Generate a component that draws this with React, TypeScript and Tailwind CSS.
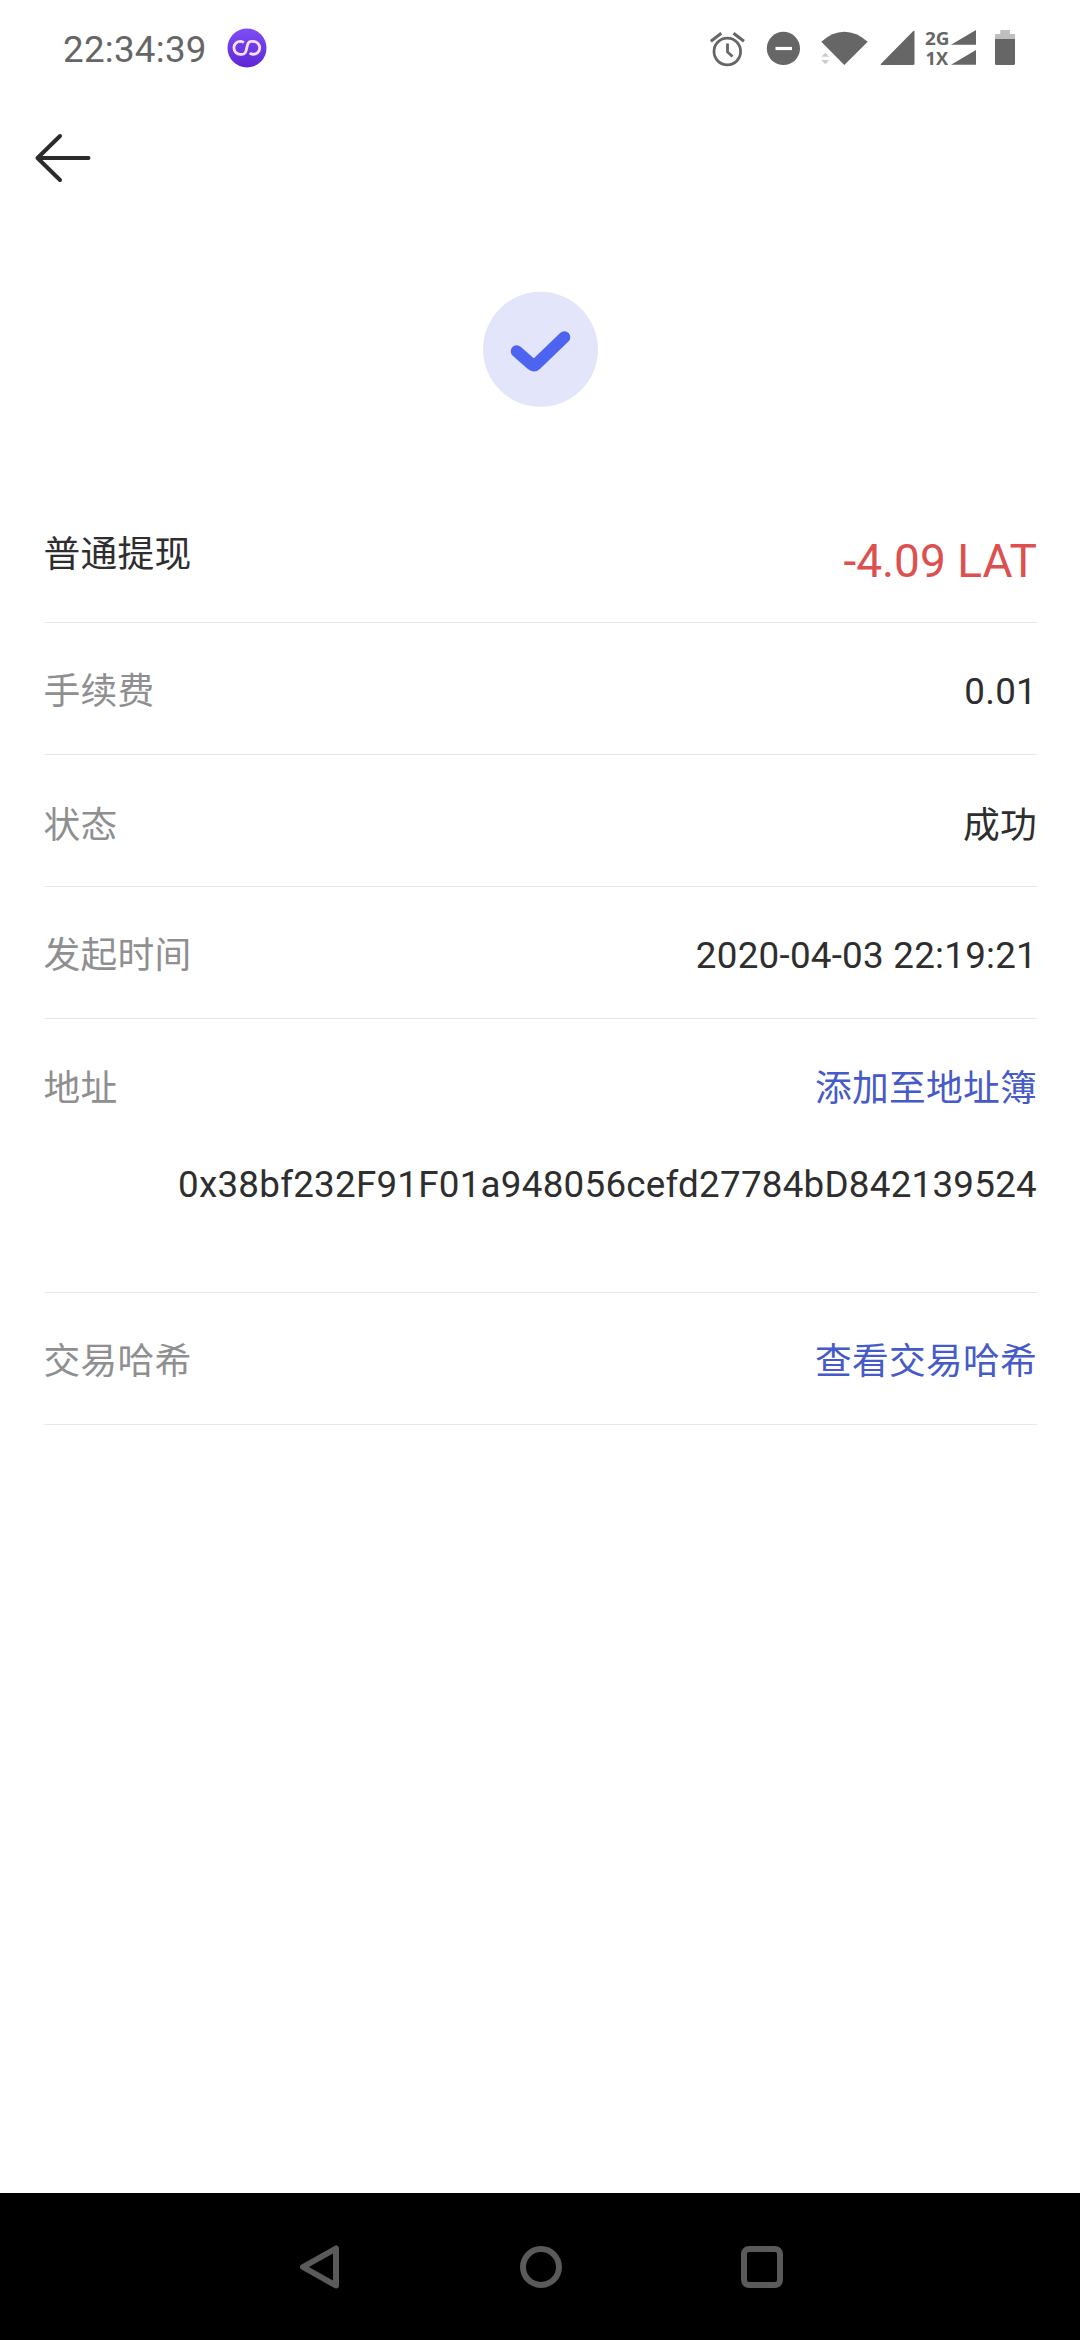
import type { ReactNode } from "react";

const StatusBar = () => {
  return (
    <div className="flex h-24 items-center justify-between pl-[63px] pr-[64px] text-[#666666]">
      {/* Clock + app notification */}
      <div className="flex items-center gap-[21px]">
        <span className="mt-[3px] w-[143px] whitespace-nowrap leading-[43px]">22:34:39</span>
        <svg width="40" height="40" viewBox="0 0 40 40" fill="none">
          <defs>
            <linearGradient id="badge" x1="0" y1="0" x2="0" y2="1">
              <stop offset="0" stopColor="#7f4df6" />
              <stop offset="1" stopColor="#5f26d6" />
            </linearGradient>
          </defs>
          <circle cx="20" cy="20" r="19.5" fill="url(#badge)" />
          <path
            d="M16.800 14.600C16 13.700 14.800 13.300 13.400 13.300A6.500 6.500 0 0 0 13.400 26.300H15C18.300 26.300 18.900 24 19.800 19.800C20.700 15.600 21.300 13.300 24.600 13.300H26.200A6.500 6.500 0 0 1 26.200 26.300C24.800 26.300 23.600 25.900 22.800 25"
            stroke="#f6e2ff"
            strokeWidth="2.800"
          />
        </svg>
      </div>
      {/* System icons */}
      <svg width="306" height="48" viewBox="710 24 306 48" fill="none">
        <circle cx="727.3" cy="51.500" r="13.300" stroke="#666666" strokeWidth="2.800" />
        <path d="M727.500 43.500v8.500l5 4.500" stroke="#666666" strokeWidth="2.800" />
        <path d="M710.800 41.300l10.500-8M744 41.300l-10.500-8" stroke="#666666" strokeWidth="3" />
        <circle cx="783.400" cy="48.400" r="16.600" fill="#666666" />
        <path d="M775.500 48.500h16.500" stroke="#fff" strokeWidth="3.200" />
        <path d="M821.300 41.700Q832 31.700 844.300 31.700T867.700 41.700L844.300 65z" fill="#666666" />
        <path d="M821.300 56.700l4-4 4 4zM821.300 60l4 4.300 4-4.300z" fill="#cccccc" />
        <path d="M914.500 31v32.500q0 1.500-1.500 1.500H881.500q-1.500 0-.5-1.200L912.800 31.500q1-1 1.700-.5z" fill="#666666" />
        <g fill="#666666" fontFamily="Open Sans, sans-serif" fontSize="17.500" fontWeight="700" letterSpacing="0">
          <text x="925" y="44.700" textLength="24.500" lengthAdjust="spacingAndGlyphs">2G</text>
          <text x="925.500" y="64.800" textLength="22.500" lengthAdjust="spacingAndGlyphs">1X</text>
        </g>
        <path d="M976 30v14.700h-25zM976 50v14.700h-25z" fill="#666666" />
        <path d="M1000.300 30h9.700v4h5v5h-20v-5h5.300z" fill="#bfbfbf" />
        <path d="M995 39h20v24.500q0 1.500-1.500 1.500h-17q-1.500 0-1.500-1.500z" fill="#666666" />
      </svg>
    </div>
  );
};

const Row = ({ className, children }: { className: string; children: ReactNode }) => (
  <div className={`flex items-start justify-between border-b border-[#e8e8e8] ${className}`}>
    {children}
  </div>
);

const App = () => {
  return (
    <div className="flex h-[2340px] w-[1080px] flex-col overflow-hidden bg-white font-[Roboto,'Noto_Sans_CJK_SC',sans-serif] text-[36.75px] leading-[45px] tracking-[0.25px] text-[#2e2e2e]">
      <StatusBar />

      {/* Back */}
      <header className="flex h-[124px] items-center pl-[34px]">
        <svg width="58" height="50" viewBox="34 133 58 50" fill="none">
          <path
            d="M60 136L37.500 158L60 180M37.500 158H88.500"
            stroke="#2b2b2b"
            strokeWidth="4"
            strokeLinecap="round"
            strokeLinejoin="round"
          />
        </svg>
      </header>

      {/* Result */}
      <div className="flex justify-center pt-[71px]">
        <svg width="116" height="116" viewBox="0 0 116 116" fill="none">
          <circle cx="58.500" cy="58.300" r="57.500" fill="#e3e5fa" />
          <path
            d="M34.700 60.200L49.500 73.300Q52 75.300 54.500 73L82.300 46.200"
            stroke="#4d64f0"
            strokeWidth="12"
            strokeLinecap="round"
            strokeLinejoin="round"
          />
        </svg>
      </div>

      {/* Transaction details */}
      <main className="flex-1 pl-[43.500px] pr-[43px] pt-[104px] text-[#8f8f91]">
        <Row className="h-[112px]">
          <span className="mt-[21px] text-[#2e2e2e]">普通提现</span>
          <span className="mt-[22px] text-[46px] leading-[56px] tracking-normal text-[#dc5050]">
            -4.09 LAT
          </span>
        </Row>
        <Row className="h-[132px] pt-[46px]">
          <span>手续费</span>
          <span className="text-[#2e2e2e]">0.01</span>
        </Row>
        <Row className="h-[132px] pt-[48px]">
          <span>状态</span>
          <span className="text-[#2e2e2e]">成功</span>
        </Row>
        <Row className="h-[132px] pt-[46px]">
          <span>发起时间</span>
          <span className="text-[#2e2e2e]">2020-04-03 22:19:21</span>
        </Row>
        <div className="h-[274px] border-b border-[#e8e8e8] pt-[47px]">
          <div className="flex justify-between">
            <span>地址</span>
            <span className="text-[#465ac8]">添加至地址簿</span>
          </div>
          <p className="mt-[51px] text-right text-[#2e2e2e]">
            0x38bf232F91F01a948056cefd27784bD842139524
          </p>
        </div>
        <Row className="h-[132px] pt-[46px]">
          <span>交易哈希</span>
          <span className="text-[#465ac8]">查看交易哈希</span>
        </Row>
      </main>

      {/* Android navigation */}
      <nav className="flex h-[147px] items-center justify-between bg-black pl-[299px] pr-[296px]">
        <svg width="42" height="44" viewBox="0 0 42 44" fill="none" stroke="#5a5a5a" strokeWidth="6">
          <path d="M4 22L37 3.500V40.500z" strokeLinejoin="round" />
        </svg>
        <svg width="44" height="44" viewBox="0 0 44 44" fill="none" stroke="#5a5a5a" strokeWidth="6">
          <circle cx="22" cy="22" r="18" />
        </svg>
        <svg width="44" height="44" viewBox="0 0 44 44" fill="none" stroke="#5a5a5a" strokeWidth="6">
          <rect x="4" y="4" width="36" height="36" rx="5" />
        </svg>
      </nav>
    </div>
  );
};

export default App;
